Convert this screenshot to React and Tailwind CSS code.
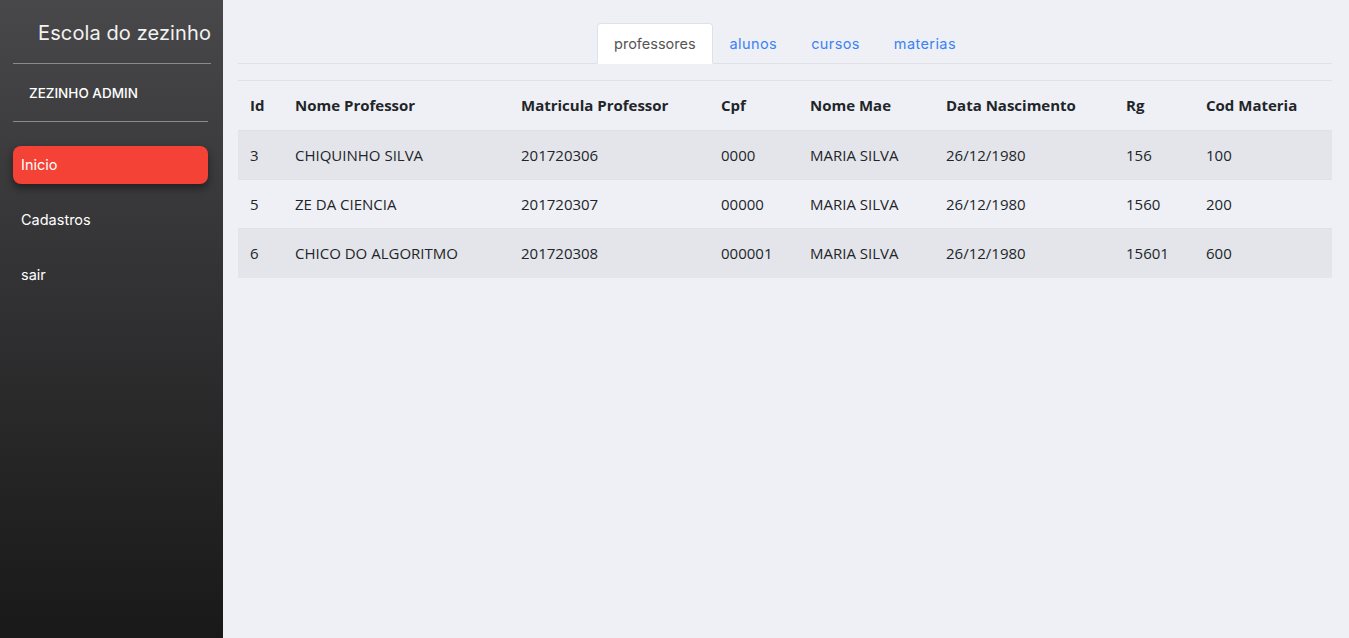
import React from "react";

const rows = [
  { id: 3, nome: "CHIQUINHO SILVA", matricula: "201720306", cpf: "0000", mae: "MARIA SILVA", nasc: "26/12/1980", rg: "156", cod: "100" },
  { id: 5, nome: "ZE DA CIENCIA", matricula: "201720307", cpf: "00000", mae: "MARIA SILVA", nasc: "26/12/1980", rg: "1560", cod: "200" },
  { id: 6, nome: "CHICO DO ALGORITMO", matricula: "201720308", cpf: "000001", mae: "MARIA SILVA", nasc: "26/12/1980", rg: "15601", cod: "600" },
];

const tabs = ["professores", "alunos", "cursos", "materias"];

export default function App() {
  return (
    <div className="flex min-h-[638px] w-full bg-[#eff0f5]">
      {/* Sidebar */}
      <aside className="w-[223px] shrink-0 bg-gradient-to-b from-[#48484a] to-[#19191a] pl-[13px] pr-[15px] font-['Inter',sans-serif] text-white">
        <div className="-mr-[3px] flex h-[64px] items-center justify-end border-b border-[#8a8a8c] pt-[2px]">
          <span className="text-[20px] tracking-[0.1px] text-[#f2f2f2]">Escola do zezinho</span>
        </div>
        <div className="flex h-[58px] items-center border-b border-[#8a8a8c] pl-4 pt-[2px] text-[13.5px] font-medium">
          ZEZINHO ADMIN
        </div>
        <nav className="mt-[24px] flex flex-col gap-[17px]">
          <a className="flex h-[38px] items-center rounded-lg bg-[#f44336] pl-2 text-[14.5px] shadow-[0_4px_8px_rgba(0,0,0,0.45)]">
            Inicio
          </a>
          <a className="flex h-[38px] items-center pl-2 text-[14.5px]">Cadastros</a>
          <a className="flex h-[38px] items-center pl-2 text-[14.5px]">sair</a>
        </nav>
      </aside>

      {/* Main */}
      <main className="flex-1 pl-[15px] pr-[17px] pt-[23px]">
        <ul className="flex justify-center border-b border-[#dee2e6] font-['Inter',sans-serif] text-[14.5px]">
          {tabs.map((t, i) => (
            <li
              key={t}
              className={
                i === 0
                  ? "-mb-px flex h-[41px] items-center rounded-t-[4px] border border-[#dee2e6] border-b-white bg-white px-4 text-[#555]"
                  : "-mb-px flex h-[41px] items-center border border-transparent px-4 tracking-[0.4px] text-[#3b82f6]"
              }
            >
              {t}
            </li>
          ))}
        </ul>

        <table className="mt-[16px] w-full border-collapse font-['Open_Sans',sans-serif] text-[15px] text-[#212529]">
          <thead>
            <tr className="h-[50px] border-t border-[#dee2e6] text-left">
              <th className="w-[45px] pl-3 font-bold">Id</th>
              <th className="w-[226px] pl-3 font-bold">Nome Professor</th>
              <th className="w-[200px] pl-3 font-bold">Matricula Professor</th>
              <th className="w-[89px] pl-3 font-bold">Cpf</th>
              <th className="w-[136px] pl-3 font-bold">Nome Mae</th>
              <th className="w-[180px] pl-3 font-bold">Data Nascimento</th>
              <th className="w-[80px] pl-3 font-bold">Rg</th>
              <th className="pl-3 font-bold">Cod Materia</th>
            </tr>
          </thead>
          <tbody>
            {rows.map((r, i) => (
              <tr key={r.id} className={`h-[49px] border-t border-[#dee2e6] ${i % 2 === 0 ? "bg-[#e4e5ea]" : ""}`}>
                <td className="pl-3">{r.id}</td>
                <td className="pl-3">{r.nome}</td>
                <td className="pl-3">{r.matricula}</td>
                <td className="pl-3">{r.cpf}</td>
                <td className="pl-3">{r.mae}</td>
                <td className="pl-3">{r.nasc}</td>
                <td className="pl-3">{r.rg}</td>
                <td className="pl-3">{r.cod}</td>
              </tr>
            ))}
          </tbody>
        </table>
      </main>
    </div>
  );
}
